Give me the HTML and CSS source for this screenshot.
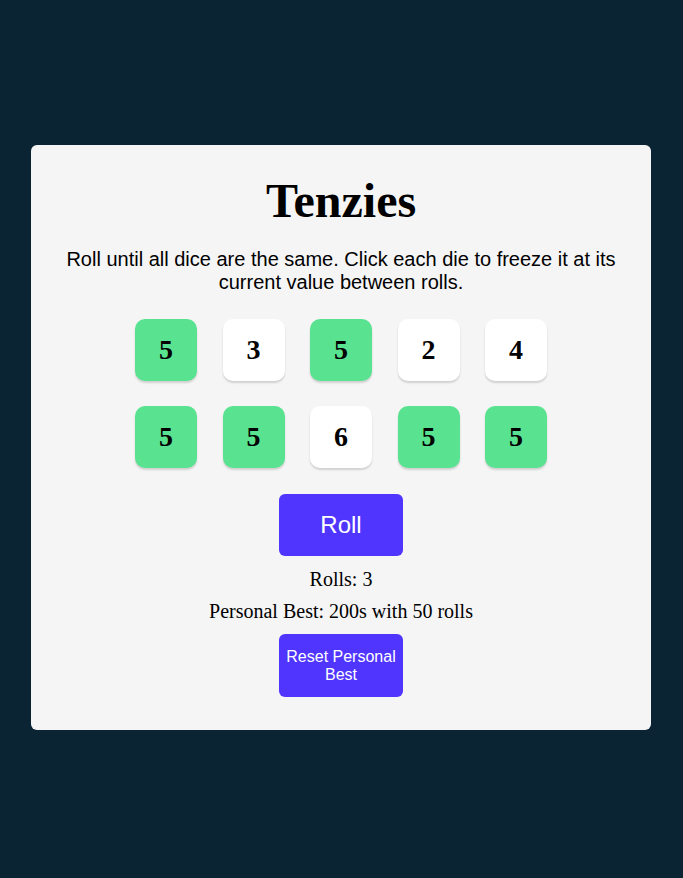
FILE: index.html
```html
<!DOCTYPE html>
<html lang="en">
<head>
<meta charset="utf-8">
<title>Tenzies</title>
<link rel="stylesheet" href="styles.css">
</head>
<body>
<main class="card">
  <h1 class="title">Tenzies</h1>
  <p class="instructions">Roll until all dice are the same. Click each die to freeze it at its current value between rolls.</p>
  <div class="dice">
    <button class="die held">5</button>
    <button class="die">3</button>
    <button class="die held">5</button>
    <button class="die">2</button>
    <button class="die">4</button>
    <button class="die held">5</button>
    <button class="die held">5</button>
    <button class="die">6</button>
    <button class="die held">5</button>
    <button class="die held">5</button>
  </div>
  <button class="btn roll">Roll</button>
  <p class="stat rolls">Rolls: 3</p>
  <p class="stat best">Personal Best: 200s with 50 rolls</p>
  <button class="btn reset">Reset Personal Best</button>
</main>
</body>
</html>
```
FILE: styles.css
```css
html, body {
  margin: 0;
  padding: 0;
}
body {
  background: #0B2434;
  min-height: 100vh;
  display: flex;
  align-items: center;
  justify-content: center;
  font-family: "Liberation Serif", "Times New Roman", serif;
  color: #000;
}
.card {
  box-sizing: border-box;
  width: 620px;
  height: 585px;
  background: #F5F5F5;
  border-radius: 6px;
  padding: 29px 30px 0;
  display: flex;
  flex-direction: column;
  align-items: center;
  margin: -3px 1px 0 0;
}
.title {
  margin: 0;
  font-size: 48px;
  font-weight: bold;
  line-height: 53px;
}
.instructions {
  margin: 21px 0 0;
  font-family: "Liberation Sans", Arial, sans-serif;
  font-size: 20px;
  line-height: 23px;
  text-align: center;
}
.dice {
  margin-top: 25px;
  display: grid;
  grid-template-columns: repeat(5, 62px);
  grid-auto-rows: 62px;
  column-gap: 25.5px;
  row-gap: 25px;
}
.die {
  border: none;
  padding: 0;
  margin: 0;
  width: 62px;
  height: 62px;
  border-radius: 10px;
  background: #FFFFFF;
  box-shadow: 0 2px 2px rgba(0, 0, 0, 0.15);
  font-family: "Liberation Serif", "Times New Roman", serif;
  font-weight: bold;
  font-size: 28px;
  color: #000;
  display: flex;
  align-items: center;
  justify-content: center;
}
.die.held {
  background: #59E391;
}
.btn {
  border: none;
  margin: 0;
  background: #5035FF;
  color: #FFFFFF;
  border-radius: 6px;
  font-family: "Liberation Sans", Arial, sans-serif;
  width: 124px;
  padding: 1px 6px;
}
.roll {
  margin-top: 26px;
  height: 62px;
  font-size: 24px;
}
.stat {
  margin: 0;
  font-size: 20px;
  line-height: 22px;
}
.rolls {
  margin-top: 12px;
}
.best {
  margin-top: 9.5px;
}
.reset {
  margin-top: 12.5px;
  height: 63px;
  font-size: 16px;
}
```
